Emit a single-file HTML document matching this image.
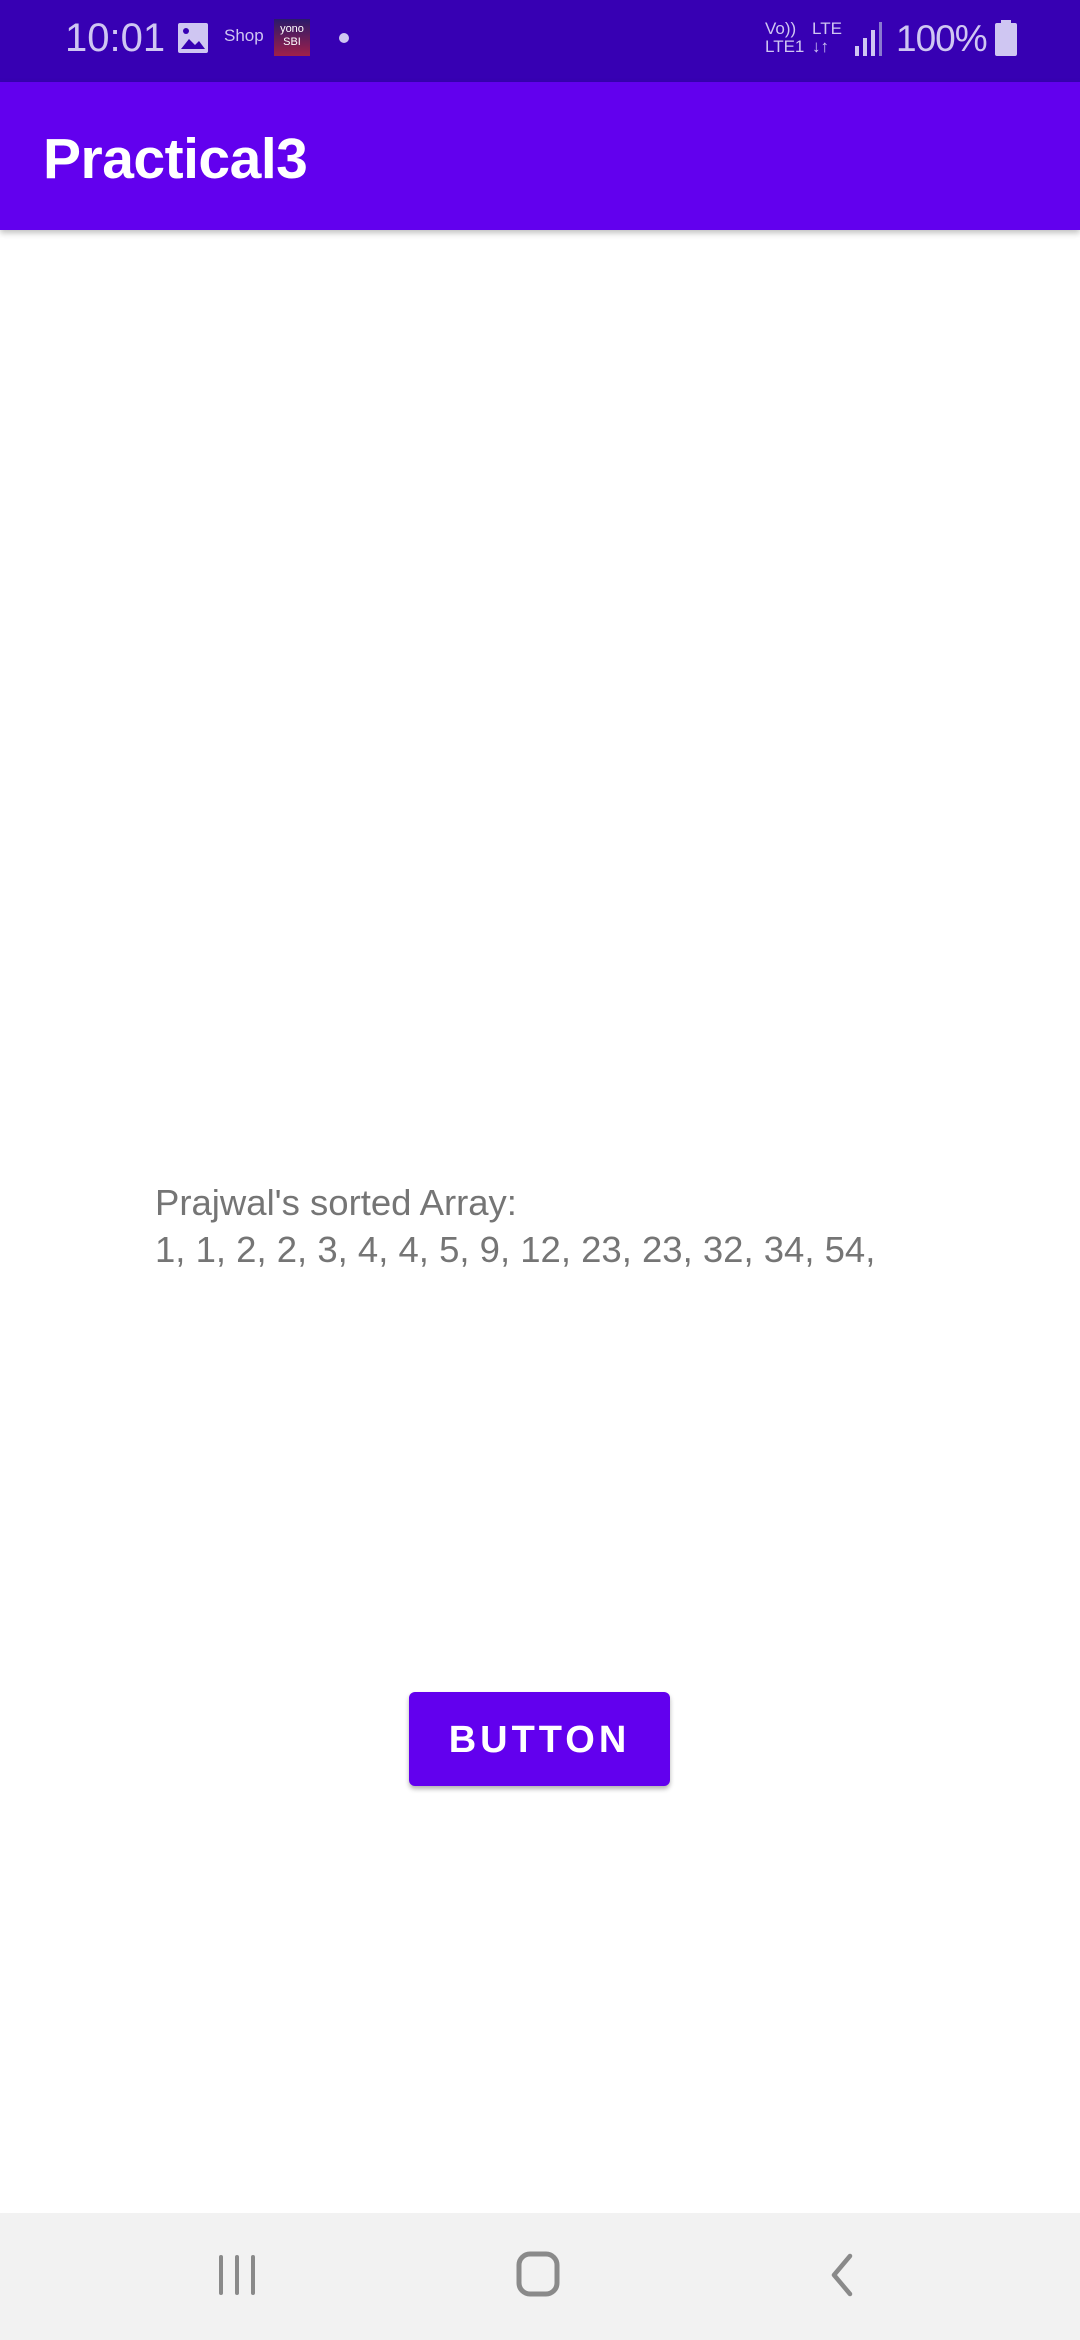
<!DOCTYPE html>
<html><head><meta charset="utf-8"><style>
body{margin:0;width:1080px;height:2340px;position:relative;background:#fff;font-family:"Liberation Sans",Roboto,sans-serif;overflow:hidden}
.sb{position:absolute;left:0;top:0;width:1080px;height:82px;background:#3700B3;color:#cfc6f2}
.ab{position:absolute;left:0;top:82px;width:1080px;height:148px;background:#6200EE;box-shadow:0 3px 6px rgba(0,0,0,.25)}
.ab span{position:absolute;left:43px;top:44px;font-size:57px;color:#fff;font-weight:bold;letter-spacing:-0.5px}
.txt{position:absolute;left:155px;top:1179px;font-size:36.5px;line-height:47px;color:#757575}
.btn{position:absolute;left:409px;top:1692px;width:261px;height:94px;background:#6200EE;border-radius:6px;box-shadow:0 3px 5px rgba(0,0,0,.3);color:#fff;font-size:38px;font-weight:bold;letter-spacing:4px;text-align:center;line-height:96px}
.nav{position:absolute;left:0;top:2213px;width:1080px;height:127px;background:#f2f2f2}
</style></head><body>
<div class="sb">
<span style="position:absolute;left:65px;top:16px;font-size:40px">10:01</span>
<svg style="position:absolute;left:177px;top:22px" width="32" height="32" viewBox="0 0 32 32"><rect x="1" y="1" width="30" height="30" rx="2" fill="#cfc6f2"/><path d="M4 27 L12 17 L18 23 L22 19 L28 27Z" fill="#3700B3"/><circle cx="9" cy="9" r="3" fill="#3700B3"/></svg>
<span style="position:absolute;left:224px;top:26px;font-size:17px">Shop</span>
<div style="position:absolute;left:274px;top:19px;width:36px;height:37px;background:linear-gradient(#2a1a6a,#a0204a);color:#fff;font-size:11px;text-align:center;line-height:13px;padding-top:4px;box-sizing:border-box">yono<br>SBI</div>
<div style="position:absolute;left:339px;top:33px;width:10px;height:10px;border-radius:5px;background:#cfc6f2"></div>
<span style="position:absolute;left:765px;top:20px;font-size:17px;line-height:18px">Vo))<br>LTE1</span>
<span style="position:absolute;left:812px;top:20px;font-size:17px;line-height:18px">LTE<br>↓↑</span>
<svg style="position:absolute;left:853px;top:22px" width="30" height="34"><rect x="2" y="24" width="4" height="10" fill="#cfc6f2"/><rect x="10" y="16" width="4" height="18" fill="#cfc6f2"/><rect x="18" y="8" width="4" height="26" fill="#cfc6f2"/><rect x="26" y="0" width="3" height="34" fill="#8a7ad0"/></svg>
<span style="position:absolute;left:896px;top:18px;font-size:37px;letter-spacing:-1px">100%</span>
<svg style="position:absolute;left:995px;top:20px" width="22" height="36"><rect x="6" y="0" width="10" height="4" fill="#cfc6f2"/><rect x="0" y="3" width="22" height="33" rx="2" fill="#cfc6f2"/></svg>
</div>
<div class="ab"><span>Practical3</span></div>
<div class="txt">Prajwal's sorted Array:<br>1, 1, 2, 2, 3, 4, 4, 5, 9, 12, 23, 23, 32, 34, 54,</div>
<div class="btn">BUTTON</div>
<div class="nav">
<svg style="position:absolute;left:215px;top:40px" width="44" height="44"><g stroke="#8a8a8a" stroke-width="4" stroke-linecap="round"><line x1="6" y1="4" x2="6" y2="40"/><line x1="22" y1="4" x2="22" y2="40"/><line x1="38" y1="4" x2="38" y2="40"/></g></svg>
<svg style="position:absolute;left:516px;top:38px" width="44" height="46"><rect x="3" y="3" width="38" height="40" rx="11" fill="none" stroke="#8a8a8a" stroke-width="5"/></svg>
<svg style="position:absolute;left:826px;top:40px" width="30" height="44"><path d="M24 3 L8 22 L24 41" fill="none" stroke="#8a8a8a" stroke-width="4.5" stroke-linecap="round" stroke-linejoin="round"/></svg>
</div>
</body></html>
